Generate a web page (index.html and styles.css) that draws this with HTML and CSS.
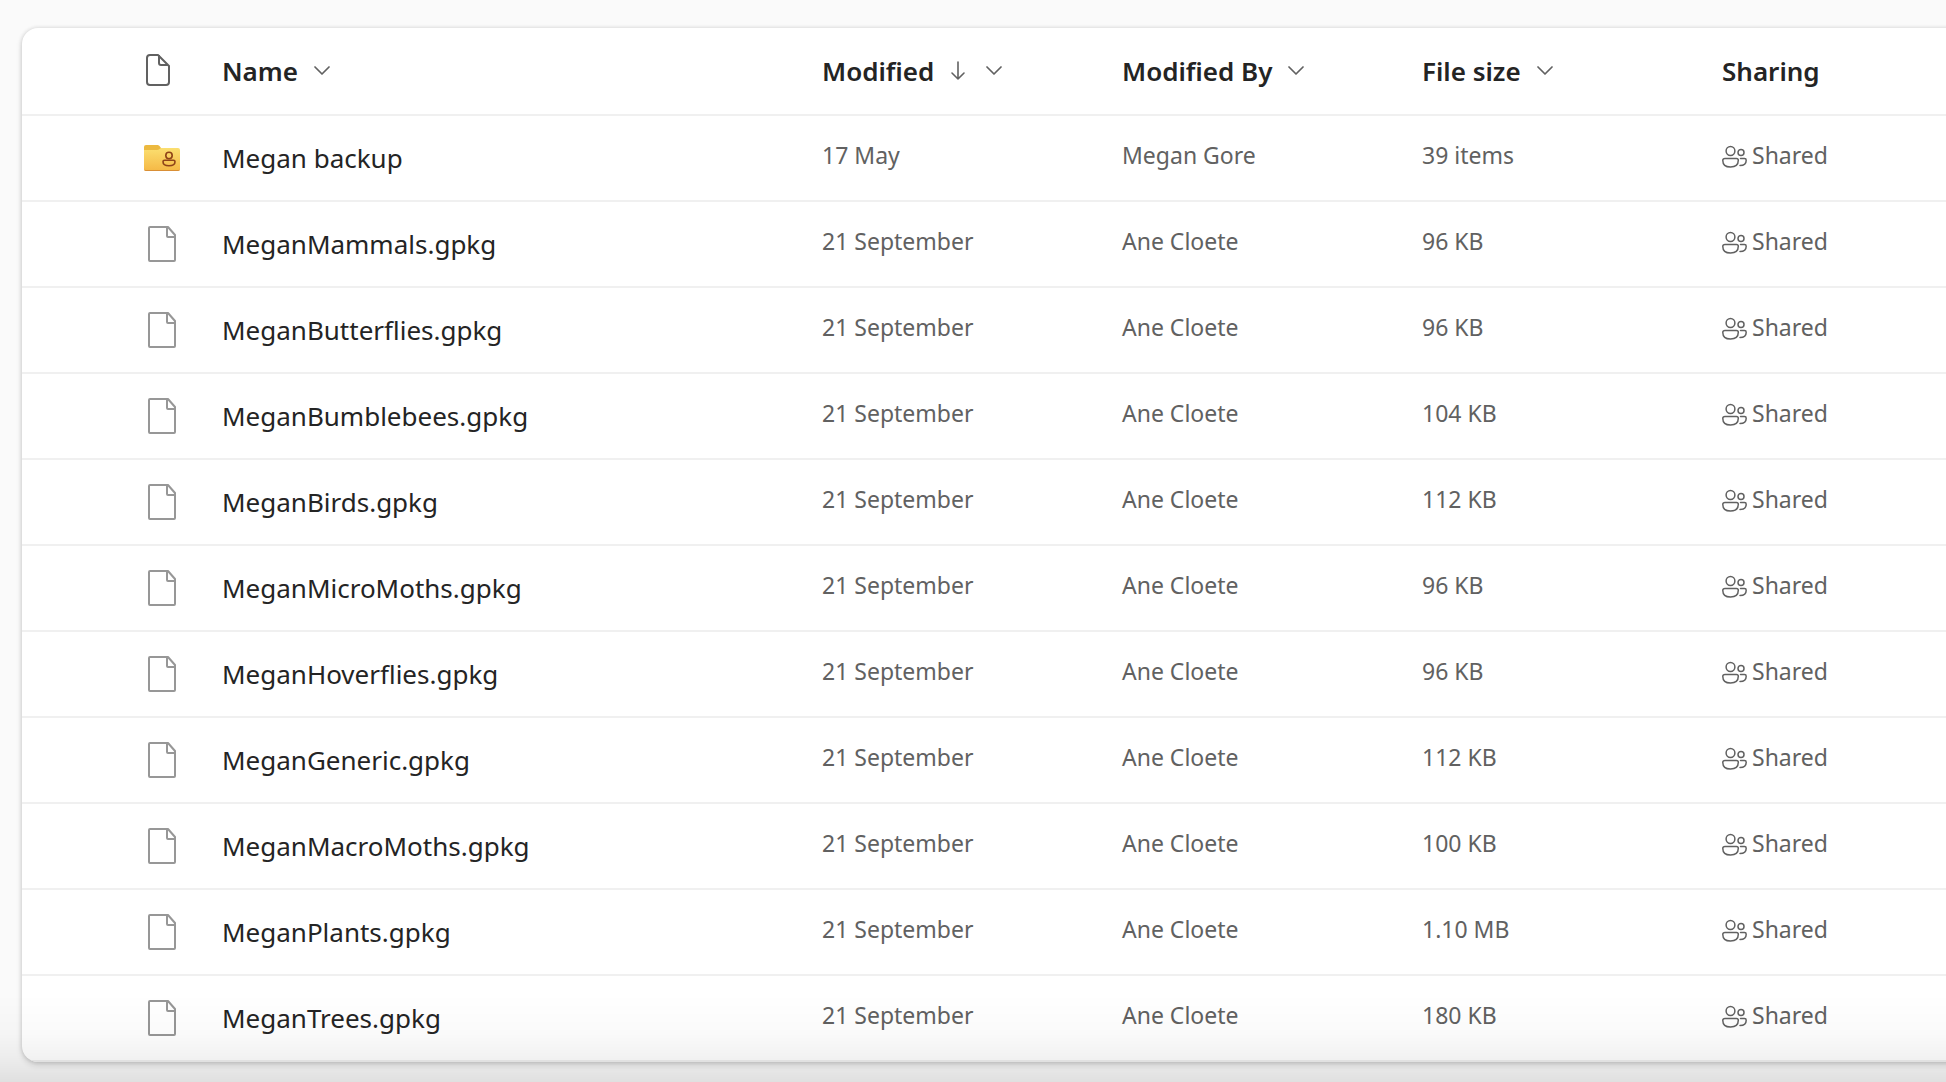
FILE: index.html
```
<!DOCTYPE html>
<html lang="en-GB">
<head>
<meta charset="utf-8">
<meta name="viewport" content="width=device-width, initial-scale=1">
<title>Shared files</title>
<link rel="stylesheet" href="styles.css">
<script src="files.js" defer></script>
</head>
<body>
<svg class="sprite" aria-hidden="true">
  <defs>
    <linearGradient id="folder-fill" x1="0" y1="0" x2="0" y2="1">
      <stop offset="0" stop-color="#fbdf70"/>
      <stop offset="1" stop-color="#f5b845"/>
    </linearGradient>
    <symbol id="chevron" viewBox="0 0 16 10"><path d="M1 1l7 7 7-7" fill="none" stroke="#616161" stroke-width="1.7" stroke-linecap="round" stroke-linejoin="round"/></symbol>
    <symbol id="arrow" viewBox="0 0 16 20"><path d="M8 1v17M2 12l6 6 6-6" fill="none" stroke="#616161" stroke-width="1.6" stroke-linecap="round" stroke-linejoin="round"/></symbol>
    <symbol id="doc-header" viewBox="0 0 36 36"><path d="M6 2h8l11 11v16a3 3 0 0 1-3 3H6a3 3 0 0 1-3-3V5a3 3 0 0 1 3-3zM15 2v8a2 2 0 0 0 2 2H24.500" fill="none" stroke="#616161" stroke-width="2" stroke-linejoin="round"/></symbol>
    <symbol id="doc" viewBox="0 0 36 36"><path d="M6 1h18l7 8V34a1 1 0 0 1-1 1H6a1 1 0 0 1-1-1V2a1 1 0 0 1 1-1zM23 1v9a1 1 0 0 0 1 1H31" fill="#fff" fill-opacity=".6" stroke="#979797" stroke-width="2" stroke-linejoin="round"/></symbol>
    <symbol id="folder" viewBox="0 0 36 36">
      <path d="M2 5h11.500q1 0 1.800.8L17 8v4H0V7q0-2 2-2z" fill="#ecb93f"/>
      <path d="M0 10h13q1.500 0 2.500-1t2-1H34q2 0 2 2v19q0 2-2 2H2q-2 0-2-2z" fill="url(#folder-fill)"/>
      <path d="M0 28.500q0 1.500 2 1.500h32q2 0 2-1.500v.5q0 2-2 2H2q-2 0-2-2z" fill="#d98f36"/>
      <g fill="none" stroke="#8f4318" stroke-width="1.600"><circle cx="25" cy="15.500" r="3.200"/><path d="M20.500 20.200h9q1.500 0 1.500 1.500 0 4-6 4t-6-4q0-1.500 1.500-1.500z"/></g>
    </symbol>
    <symbol id="people" viewBox="0 0 26 24"><g fill="none" stroke="#616161" stroke-width="1.500" stroke-linecap="round"><circle cx="8.500" cy="6" r="4.400"/><circle cx="19" cy="7.500" r="3"/><path d="M3 13.500h11.500q1.800 0 1.800 1.800 0 6.700-7.800 6.700T.8 15.300q0-1.800 2.200-1.800zM18.500 13.500h4q1.700 0 1.700 1.700 0 5.300-6.200 5.300"/></g></symbol>
  </defs>
</svg>
<main class="page">
  <div class="card">
    <table class="files">
      <colgroup><col class="col-icon"><col><col class="col-meta"><col class="col-meta"><col class="col-meta"><col class="col-sharing"></colgroup>
      <thead>
        <tr>
          <th scope="col" class="icon-cell"><button class="head" aria-label="File type"><svg class="file-icon"><use href="#doc-header"/></svg></button></th>
          <th scope="col"><button class="head">Name<svg class="chevron"><use href="#chevron"/></svg></button></th>
          <th scope="col" aria-sort="descending"><button class="head">Modified<span class="sort"><svg class="arrow"><use href="#arrow"/></svg><svg class="chevron"><use href="#chevron"/></svg></span></button></th>
          <th scope="col"><button class="head">Modified By<svg class="chevron"><use href="#chevron"/></svg></button></th>
          <th scope="col"><button class="head">File size<svg class="chevron"><use href="#chevron"/></svg></button></th>
          <th scope="col"><button class="head">Sharing</button></th>
        </tr>
      </thead>
      <tbody id="rows"></tbody>
    </table>
  </div>
</main>
</body>
</html>
```

FILE: styles.css
```
* { box-sizing: border-box; }

body {
  margin: 0;
  background: #fafafa;
  color: #242424;
  font-family: "Segoe UI", "Noto Sans", sans-serif;
  font-size: 26px;
  line-height: 36px;
}

/* Shade along the bottom edge of the window */
body::after {
  content: "";
  position: fixed;
  inset: auto 0 0;
  height: 88px;
  background: linear-gradient(rgba(0, 0, 0, 0), rgba(0, 0, 0, .02) 45%, rgba(0, 0, 0, .05) 72%, rgba(0, 0, 0, .1));
  pointer-events: none;
}

.sprite { position: absolute; width: 0; height: 0; }

.page { padding: 28px 0 20px 22px; overflow: hidden; }

/* The card runs past the right edge, so its shadow does not fade there */
.card {
  margin-right: -16px;
  background: #fff;
  border-radius: 16px 0 0 16px;
  box-shadow: 0 0 4px rgba(0, 0, 0, .14), 0 3px 6px rgba(0, 0, 0, .14);
  overflow: hidden;
}

.files { width: 100%; table-layout: fixed; border-collapse: separate; border-spacing: 0; }
.col-icon { width: 200px; }
.col-meta { width: 300px; }
.col-sharing { width: 240px; }

th, td {
  height: 86px;
  padding: 0;
  border-bottom: 2px solid #f0f0f0;
  text-align: left;
  font-weight: 400;
  white-space: nowrap;
}
th { height: 88px; }
.icon-cell { padding-left: 122px; }

button {
  padding: 0;
  border: 0;
  background: none;
  color: inherit;
  font: inherit;
  cursor: pointer;
}

.head { display: flex; align-items: center; gap: 16px; font-weight: 600; }
.sort { display: flex; align-items: center; gap: 20px; }

svg { display: block; flex: none; }
.file-icon { width: 36px; height: 36px; }
.chevron { width: 16px; height: 10px; }
.arrow { width: 16px; height: 20px; }
.people { width: 26px; height: 24px; margin-top: 4px; }

.file-name { color: inherit; text-decoration: none; }
.file-name:hover { text-decoration: underline; }

.meta { padding-bottom: 6px; color: #616161; font-size: 23px; }
.shared { display: flex; align-items: center; gap: 4px; }
```

FILE: files.js
```
const files = [
  ["Megan backup", "17 May", "Megan Gore", "39 items", "folder"],
  ["MeganMammals.gpkg", "21 September", "Ane Cloete", "96 KB"],
  ["MeganButterflies.gpkg", "21 September", "Ane Cloete", "96 KB"],
  ["MeganBumblebees.gpkg", "21 September", "Ane Cloete", "104 KB"],
  ["MeganBirds.gpkg", "21 September", "Ane Cloete", "112 KB"],
  ["MeganMicroMoths.gpkg", "21 September", "Ane Cloete", "96 KB"],
  ["MeganHoverflies.gpkg", "21 September", "Ane Cloete", "96 KB"],
  ["MeganGeneric.gpkg", "21 September", "Ane Cloete", "112 KB"],
  ["MeganMacroMoths.gpkg", "21 September", "Ane Cloete", "100 KB"],
  ["MeganPlants.gpkg", "21 September", "Ane Cloete", "1.10 MB"],
  ["MeganTrees.gpkg", "21 September", "Ane Cloete", "180 KB"]
];

document.getElementById("rows").innerHTML = files.map(([name, modified, by, size, icon = "doc"]) => `
  <tr>
    <td class="icon-cell"><svg class="file-icon"><use href="#${icon}"/></svg></td>
    <td><a class="file-name" href="#">${name}</a></td>
    <td class="meta">${modified}</td>
    <td class="meta">${by}</td>
    <td class="meta">${size}</td>
    <td class="meta"><button class="shared"><svg class="people"><use href="#people"/></svg>Shared</button></td>
  </tr>`).join("");
```
